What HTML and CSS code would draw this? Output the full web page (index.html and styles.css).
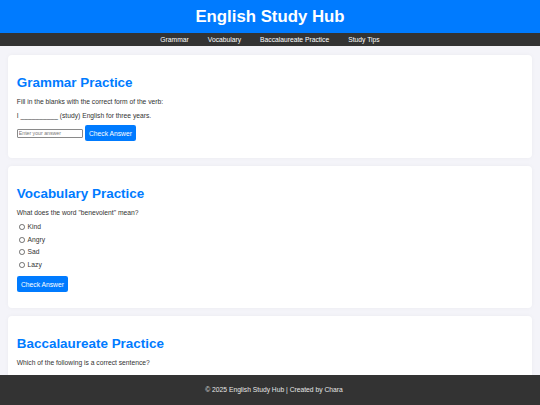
FILE: index.html
```html
<!DOCTYPE html>
<html lang="en">
<head>
<meta charset="utf-8">
<title>English Study Hub</title>
<link rel="stylesheet" href="styles.css">
</head>
<body>
<header class="site-header">
  <h1 class="site-title">English Study Hub</h1>
</header>
<nav class="site-nav">
  <a href="#grammar">Grammar</a>
  <a href="#vocabulary">Vocabulary</a>
  <a href="#bac">Baccalaureate Practice</a>
  <a href="#tips">Study Tips</a>
</nav>
<main class="content">
  <section class="card" id="grammar">
    <h2 class="card-title">Grammar Practice</h2>
    <p>Fill in the blanks with the correct form of the verb:</p>
    <p>I __________ (study) English for three years.</p>
    <div class="answer-row">
      <input class="answer-input" type="text" placeholder="Enter your answer">
      <button class="btn">Check Answer</button>
    </div>
  </section>

  <section class="card" id="vocabulary">
    <h2 class="card-title">Vocabulary Practice</h2>
    <p>What does the word "benevolent" mean?</p>
    <div class="options">
      <label class="option"><input class="radio" type="radio" name="vocab"> Kind</label>
      <label class="option"><input class="radio" type="radio" name="vocab"> Angry</label>
      <label class="option"><input class="radio" type="radio" name="vocab"> Sad</label>
      <label class="option"><input class="radio" type="radio" name="vocab"> Lazy</label>
    </div>
    <div class="btn-row"><button class="btn">Check Answer</button></div>
  </section>

  <section class="card" id="bac">
    <h2 class="card-title">Baccalaureate Practice</h2>
    <p>Which of the following is a correct sentence?</p>
    <div class="options options-low">
      <label class="option"><input class="radio" type="radio" name="bac"> She don't like apples.</label>
      <label class="option"><input class="radio" type="radio" name="bac"> She doesn't like apples.</label>
      <label class="option"><input class="radio" type="radio" name="bac"> She not like apples.</label>
    </div>
    <div class="btn-row"><button class="btn">Check Answer</button></div>
  </section>

  <section class="card" id="tips">
    <h2 class="card-title">Study Tips</h2>
    <p>Practice a little every day and review your mistakes.</p>
  </section>
</main>
<footer class="site-footer">© 2025 English Study Hub | Created by Chara</footer>
</body>
</html>
```

FILE: styles.css
```css
body {
  margin: 0;
  font-family: "Liberation Sans", Arial, sans-serif;
  font-size: 6.72px;
  background: #f4f4f9;
  color: #333;
}

.site-header {
  background: #007bff;
  color: #fff;
  text-align: center;
  padding: 6.5px 0;
}

.site-title {
  margin: 0;
  font-size: 16.8px;
  font-weight: bold;
}

.site-nav {
  background: #333;
  text-align: center;
  padding: 3px 0;
}

.site-nav a {
  color: #fff;
  text-decoration: none;
  margin: 0 8.6px;
}

.content {
  padding: 9.4px 8.4px 40px;
}

.card {
  background: #fff;
  border-radius: 4px;
  padding: 8.4px 8.4px 7.8px;
  margin-bottom: 8.4px;
  box-shadow: 0 0 4px rgba(0, 0, 0, 0.04);
}

.card-title {
  color: #007bff;
  font-size: 13.44px;
  margin: 11.6px 0 7.6px;
}

.card p {
  margin: 6.72px 0;
}

.answer-row {
  display: flex;
  align-items: center;
  gap: 2px;
  margin: 6.72px 0 8.5px;
}

.answer-input {
  width: 66px;
  height: 9px;
  box-sizing: border-box;
  font-family: "Liberation Sans", Arial, sans-serif;
  font-size: 5.2px;
  padding: 0 1px;
  border: 0.8px solid #8a8a8a;
  border-radius: 1px;
  margin: 0;
}

.answer-input::placeholder {
  color: #777;
}

.btn {
  background: #007bff;
  color: #fff;
  border: none;
  border-radius: 2.1px;
  font-family: "Liberation Sans", Arial, sans-serif;
  font-size: 6.72px;
  padding: 4.2px;
  line-height: 7.7px;
  margin: 0;
}

.options {
  display: flex;
  flex-direction: column;
  gap: 4.95px;
  margin: 7.4px 0 6.72px;
}

.options-low {
  margin-top: 8.4px;
}

.option {
  display: flex;
  align-items: center;
  line-height: 7.72px;
}

.radio {
  appearance: none;
  -webkit-appearance: none;
  width: 5.7px;
  height: 5.7px;
  border: 0.6px solid #6f6f6f;
  border-radius: 50%;
  box-sizing: border-box;
  margin: 0 2.7px 0 2.4px;
  background: #fff;
}

.btn-row {
  margin: 7.5px 0 7.5px;
}

.site-footer {
  position: fixed;
  left: 0;
  bottom: 0;
  width: 100%;
  background: #333;
  color: #e6e6e6;
  text-align: center;
  padding: 11.1px 4px;
  line-height: 7.72px;
}
```
